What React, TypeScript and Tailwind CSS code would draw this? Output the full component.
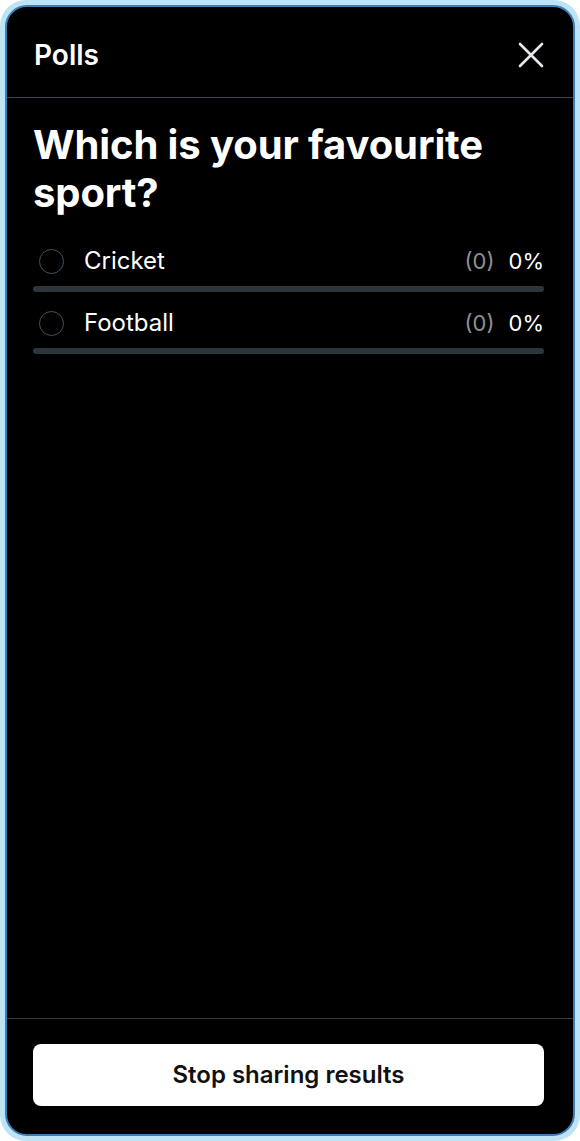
import React from "react";

type Option = {
    label: string
    votes: number
    percent: number
}

const options: Option[] = [
    {label: 'Cricket', votes: 0, percent: 0},
    {label: 'Football', votes: 0, percent: 0},
]

const CloseIcon = () => (
    <svg width="26" height="26" viewBox="0 0 26 26" fill="none" stroke="#e5e7eb" strokeWidth="2.6" strokeLinecap="round">
        <path d="M2 2 L24 24 M24 2 L2 24"/>
    </svg>
)

export default function App() {
    return (
        <div className="w-[580px] h-[1141px] bg-white" style={{fontFamily: 'Inter, "Noto Sans", sans-serif'}}>
            <div className="h-full rounded-[26px] bg-[#bde3f4] p-[5px]">
                <div className="flex h-full flex-col overflow-hidden rounded-[22px] border-2 border-[#3c7fb6] bg-black text-white">
                    <div className="flex h-[90px] shrink-0 items-center justify-between pl-[27px] pr-[29px] pt-[5px]">
                        <h1 className="text-[28px] font-semibold leading-none">Polls</h1>
                        <button>
                            <CloseIcon/>
                        </button>
                    </div>
                    <div className="h-px bg-[#3d4852]"/>

                    <div className="flex-1 pl-[26px] pr-[29px] pt-[23px]">
                        <h2 className="text-[40px] font-bold leading-[48px] tracking-[-0.1px]">
                            Which is your favourite sport?
                        </h2>
                        <div className="mt-[28px] flex flex-col gap-[15px]">
                            {options.map(option => (
                                <div key={option.label}>
                                    <div className="flex h-[32px] items-center">
                                        <span className="ml-[6px] h-[25px] w-[25px] rounded-full border-[1.5px] border-[#43525f]"/>
                                        <span className="ml-[20px] flex-1 text-[24px] leading-none">{option.label}</span>
                                        <span className="text-[22px] leading-none text-[#8b9096]">({option.votes})</span>
                                        <span className="ml-[14px] text-[22px] leading-none">{option.percent}%</span>
                                    </div>
                                    <div className="mt-[9px] h-[6px] w-full rounded-full bg-[#2f353c]"/>
                                </div>
                            ))}
                        </div>
                    </div>

                    <div className="h-px bg-[#33393f]"/>
                    <div className="shrink-0 pl-[26px] pr-[29px] pb-[28px] pt-[25px]">
                        <button className="flex h-[62px] w-full items-center justify-center rounded-[8px] bg-white text-[24px] font-semibold text-[#111]">
                            Stop sharing results
                        </button>
                    </div>
                </div>
            </div>
        </div>
    )
}
